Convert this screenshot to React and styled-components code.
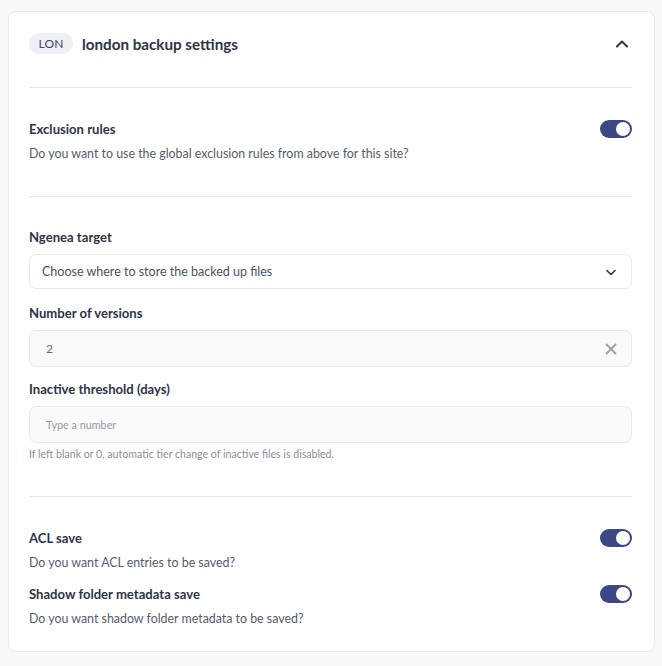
import React, { useState } from "react";
import styled, { createGlobalStyle } from "styled-components";

const GlobalStyle = createGlobalStyle`
  html, body {
    margin: 0;
    padding: 0;
    background: #f8f8f9;
    font-family: "Lato", "Noto Sans", sans-serif;
    color: #2d3446;
  }
  * { box-sizing: border-box; }
`;

const Page = styled.div`
  padding: 11px 8px 14px 8px;
  width: 662px;
`;

const Card = styled.section`
  width: 647px;
  background: #fff;
  border: 1px solid #e9e9ec;
  border-radius: 8px;
  padding: 0 22px 24px 20px;
`;

const Header = styled.div`
  display: flex;
  align-items: center;
  padding: 21px 0 33px;
  border-bottom: 1px solid #e8e9ee;
`;

const Badge = styled.span`
  display: inline-flex;
  align-items: center;
  justify-content: center;
  height: 21px;
  width: 44px;
  border-radius: 11px;
  background: #eef0f5;
  color: #434958;
  font-size: 12px;
  letter-spacing: 0.2px;
`;

const Title = styled.h2`
  margin: 0 0 0 9px;
  flex: 1;
  font-size: 15.2px;
  font-weight: 700;
  color: #2d3446;
`;

const IconButton = styled.button`
  border: none;
  background: none;
  padding: 0;
  margin-right: 3px;
  display: flex;
  color: #2d3446;
  cursor: pointer;
`;

const Section = styled.div`
  padding: ${(p) => p.$pad || "30px 0 28px"};
  border-bottom: ${(p) => (p.$last ? "none" : "1px solid #e8e9ee")};
`;

const Row = styled.div`
  display: flex;
  align-items: center;
  justify-content: space-between;
  margin-top: ${(p) => p.$mt || "0"};
`;

const Label = styled.div`
  font-size: 13.1px;
  font-weight: 700;
  color: #2d3446;
  line-height: 18px;
`;

const Desc = styled.div`
  font-size: 12.4px;
  color: #555c6c;
  margin-top: 8px;
  line-height: 16px;
`;

const Track = styled.button`
  width: 32px;
  height: 18px;
  border-radius: 9px;
  border: none;
  padding: 2px;
  background: ${(p) => (p.$on ? "#3c4784" : "#d5d8e0")};
  display: flex;
  justify-content: ${(p) => (p.$on ? "flex-end" : "flex-start")};
  cursor: pointer;
`;

const Knob = styled.span`
  width: 14px;
  height: 14px;
  border-radius: 50%;
  background: #fff;
`;

const Field = styled.div`
  margin-top: ${(p) => p.$mt || "0"};
`;

const Box = styled.div`
  margin-top: 8px;
  height: ${(p) => p.$h || "36px"};
  border: 1px solid #e9e9ee;
  border-radius: 7px;
  background: ${(p) => (p.$filled ? "#fafafb" : "#fff")};
  display: flex;
  align-items: center;
  justify-content: space-between;
  padding: 0 14px 0 ${(p) => p.$pl || "12px"};
  font-size: ${(p) => p.$fs || "12.5px"};
  color: ${(p) => p.$color || "#4b5263"};
`;

const Help = styled.div`
  margin-top: 5px;
  font-size: 10.6px;
  color: #8a8f9b;
`;

function Toggle({ initial = true }) {
  const [on, setOn] = useState(initial);
  return (
    <Track $on={on} onClick={() => setOn((v) => !v)}>
      <Knob />
    </Track>
  );
}

export default function App() {
  return (
    <Page>
      <GlobalStyle />
      <Card>
        <Header>
          <Badge>LON</Badge>
          <Title>london backup settings</Title>
          <IconButton>
            <svg width="14" height="14" viewBox="0 0 14 14" fill="none">
              <path d="M2 9.5L7 4.5L12 9.5" stroke="currentColor" strokeWidth="2" strokeLinecap="round" strokeLinejoin="round" />
            </svg>
          </IconButton>
        </Header>

        <Section $pad="32px 0 34px">
          <Row>
            <Label>Exclusion rules</Label>
            <Toggle />
          </Row>
          <Desc>Do you want to use the global exclusion rules from above for this site?</Desc>
        </Section>

        <Section $pad="31px 0 36px">
          <Field>
            <Label>Ngenea target</Label>
            <Box $h="35px">
              <span>Choose where to store the backed up files</span>
              <svg width="12" height="12" viewBox="0 0 12 12" fill="none">
                <path d="M2 4.5L6 8.5L10 4.5" stroke="#2d3446" strokeWidth="1.6" strokeLinecap="round" strokeLinejoin="round" />
              </svg>
            </Box>
          </Field>
          <Field $mt="15px">
            <Label>Number of versions</Label>
            <Box $h="37px" $filled $pl="16px" $fs="12px" $color="#62687a">
              <span>2</span>
              <svg width="12" height="12" viewBox="0 0 12 12" fill="none">
                <path d="M1.5 1.5L10.5 10.5M10.5 1.5L1.5 10.5" stroke="#9aa0ad" strokeWidth="1.8" strokeLinecap="round" />
              </svg>
            </Box>
          </Field>
          <Field $mt="13px">
            <Label>Inactive threshold (days)</Label>
            <Box $h="37px" $filled $pl="16px" $fs="10.8px" $color="#9599a4">
              <span>Type a number</span>
            </Box>
            <Help>If left blank or 0, automatic tier change of inactive files is disabled.</Help>
          </Field>
        </Section>

        <Section $pad="32px 0 0" $last>
          <Row>
            <Label>ACL save</Label>
            <Toggle />
          </Row>
          <Desc>Do you want ACL entries to be saved?</Desc>
          <Row $mt="14px">
            <Label>Shadow folder metadata save</Label>
            <Toggle />
          </Row>
          <Desc>Do you want shadow folder metadata to be saved?</Desc>
        </Section>
      </Card>
    </Page>
  );
}
